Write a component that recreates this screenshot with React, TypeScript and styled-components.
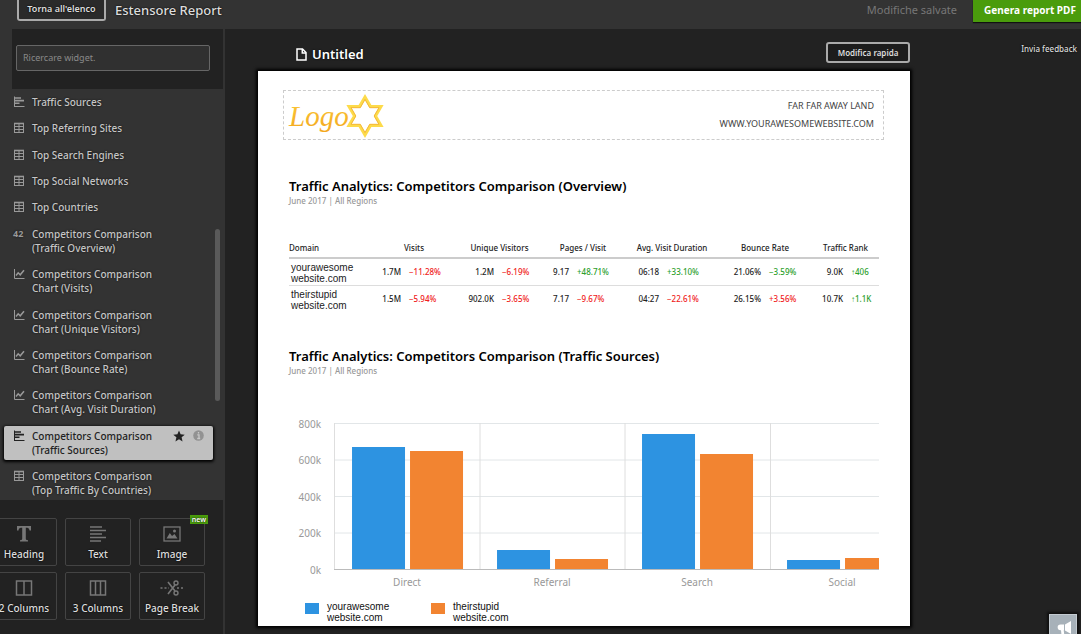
import React from "react";
import styled, { createGlobalStyle, css } from "styled-components";

const GlobalStyle = createGlobalStyle`
  * { box-sizing: border-box; }
  body {
    margin: 0;
    background: #222;
    color: #ddd;
    font-family: "Noto Sans", "Open Sans", sans-serif;
    overflow-x: hidden;
  }
  button, input { font-family: inherit; margin: 0; }
  h1, h2, p, ul { margin: 0; padding: 0; }
`;

const Page = styled.div`
  min-height: 100vh;
  display: flex;
  flex-direction: column;
`;

const TopBar = styled.header`
  height: 29px;
  display: flex;
  align-items: flex-start;
  background: #333;
  padding-left: 17px;
`;

const BackButton = styled.button`
  width: 89px;
  height: 21px;
  padding: 0 0 2px;
  border: 2px solid #aaa;
  border-top: 0;
  border-radius: 0 0 3px 3px;
  background: #2a2a2a;
  color: #ddd;
  font-size: 9px;
  font-weight: 600;
  white-space: nowrap;
  text-shadow: 0 0 2px #000;
`;

const AppTitle = styled.h1`
  margin-left: 9px;
  flex: 1;
  font-size: 13px;
  line-height: 20px;
  font-weight: 500;
  text-shadow: 0 0 2px #000;
`;

const SavedNote = styled.span`
  color: #777;
  font-size: 11px;
  line-height: 20px;
  margin-right: 16px;
`;

const GenerateButton = styled.button`
  width: 108px;
  height: 22px;
  padding: 0 2px 2px 8px;
  border: 0;
  background: #4a9c0c;
  box-shadow: 0 1px 1px #111;
  color: #fff;
  font-size: 10px;
  font-weight: 700;
  white-space: nowrap;
`;

const Body = styled.div`
  flex: 1;
  display: flex;
`;

const Sidebar = styled.aside`
  width: 225px;
  flex: none;
  display: flex;
  flex-direction: column;
  background: #333;
  border-right: 2px solid #333;
`;

const SearchBox = styled.div`
  margin-left: 12px;
  height: 60px;
  padding: 15px 13px 0 4px;
  background: #222;
`;

const SearchInput = styled.input`
  width: 100%;
  height: 26px;
  padding: 0 6px;
  border: 1px solid #666;
  border-radius: 2px;
  background: #303030;
  color: #ddd;
  font-size: 9px;
  &::placeholder { color: #8a8a8a; opacity: 1; }
`;

const ListWrap = styled.div`
  position: relative;
  flex: 1;
  display: flex;
`;

const WidgetList = styled.ul`
  flex: 1;
  list-style: none;
  padding: 3px 10px 0 4px;
  display: flex;
  flex-direction: column;
  justify-content: space-between;
`;

const WidgetRow = styled.li<{ $selected?: boolean }>`
  display: flex;
  align-items: flex-start;
  padding: 3px 9px;
  color: #c6c6c6;
  text-shadow: 0 0 2px #111;
  ${(p) =>
    p.$selected &&
    css`
      background: #c0c0c0;
      color: #222;
      border-radius: 2px;
      box-shadow: 0 1px 3px 1px #000;
      text-shadow: none;
    `}
`;

const RowIcon = styled.span<{ $dark?: boolean }>`
  width: 12px;
  height: 14px;
  margin-right: 7px;
  display: flex;
  align-items: center;
  color: ${(p) => (p.$dark ? "#222" : "#999")};
  font-size: 9px;
  font-weight: 700;
`;

const RowLabel = styled.span`
  flex: 1;
  font-size: 10px;
  line-height: 14px;
  font-weight: 500;
  white-space: pre-line;
`;

const RowActions = styled.span`
  display: flex;
  gap: 8px;
  height: 14px;
  align-items: center;
`;

const ScrollThumb = styled.span`
  position: absolute;
  right: 3px;
  top: 34%;
  height: 42%;
  width: 5px;
  border-radius: 3px;
  background: #5a5a5a;
`;

const Tools = styled.div`
  background: #222;
  padding: 18px 0 14px;
`;

const ToolGrid = styled.div`
  display: grid;
  grid-template-columns: repeat(3, 66px);
  grid-auto-rows: 48px;
  gap: 6px 8px;
  margin-left: -9px;
`;

const ToolButton = styled.button`
  position: relative;
  display: flex;
  flex-direction: column;
  align-items: center;
  justify-content: space-between;
  padding: 5px 0 4px;
  border: 1px solid #444;
  border-radius: 2px;
  background: #222;
  color: #ddd;
  font-size: 10px;
  line-height: 14px;
  font-weight: 500;
  white-space: nowrap;
  text-shadow: 0 0 2px #000;
`;

const NewBadge = styled.span`
  position: absolute;
  top: -4px;
  right: -4px;
  padding: 0 2px;
  background: #4a9c0c;
  color: #fff;
  font-size: 7px;
  font-weight: 600;
  line-height: 9px;
`;

const Main = styled.main`
  flex: 1;
  display: flex;
  align-items: flex-start;
  padding: 12px 0 8px 33px;
`;

const Document = styled.div`
  flex: 1;
  min-width: 0;
`;

const DocBar = styled.div`
  display: flex;
  align-items: flex-end;
  justify-content: space-between;
  height: 22px;
  margin-bottom: 8px;
  padding-left: 38px;
`;

const DocTitle = styled.h2`
  display: flex;
  align-items: center;
  gap: 5px;
  color: #fff;
  font-size: 13px;
  line-height: 18px;
  font-weight: 600;
  text-shadow: 0 0 2px #000;
`;

const QuickEdit = styled.button`
  width: 84px;
  height: 21px;
  padding: 0;
  border: 2px solid #aaa;
  border-radius: 3px;
  background: #1c1c1c;
  color: #ddd;
  font-size: 8px;
  font-weight: 600;
  white-space: nowrap;
`;

const SideLinks = styled.aside`
  width: 171px;
  flex: none;
  display: flex;
  justify-content: flex-end;
  padding: 0 4px 0 0;
  line-height: 16px;
`;

const FeedbackLink = styled.a`
  color: #ddd;
  font-size: 8px;
  font-weight: 500;
  text-decoration: none;
  text-shadow: 0 0 2px #000;
`;

const Paper = styled.article`
  background: #fff;
  color: #222;
  padding: 19px 26px 3px 25px;
  box-shadow: 0 0 3px 2px #000;
`;

const Letterhead = styled.div`
  height: 50px;
  display: flex;
  align-items: center;
  justify-content: space-between;
  border: 1px dashed #ccc;
  padding: 0 9px 0 3px;
`;

const Address = styled.p`
  text-align: right;
  font-size: 9px;
  line-height: 18px;
  color: #444;
`;

const Section = styled.section`
  padding: 0 5px 0 6px;
`;

const SectionTitle = styled.h2`
  color: #000;
  font-size: 13px;
  line-height: 16px;
  font-weight: 600;
`;

const SectionNote = styled.p`
  color: #999;
  font-size: 8px;
  line-height: 14px;
  font-weight: 500;
`;

const OverviewSection = styled(Section)`
  margin-top: 38px;
`;

const SourcesSection = styled(Section)`
  margin-top: 36px;
`;

const Table = styled.table`
  width: 100%;
  margin-top: 34px;
  table-layout: fixed;
  border-collapse: collapse;
  font-size: 8px;
  line-height: 12px;
  font-weight: 500;
  white-space: nowrap;
`;

const HeadCell = styled.th<{ $left?: boolean }>`
  padding: 0 0 3px;
  font-weight: 500;
  text-align: ${(p) => (p.$left ? "left" : "center")};
  border-bottom: 2px solid #ccc;
`;

const BodyRow = styled.tr`
  & + & > * { border-top: 1px solid #ddd; }
`;

const DomainCell = styled.th`
  padding: 3px 2px 1px;
  text-align: left;
  font-family: "Liberation Sans", sans-serif;
  font-size: 10px;
  line-height: 11px;
  font-weight: 400;
  white-space: pre-line;
`;

const ValueCell = styled.td`
  padding: 0 4px 0 0;
  text-align: right;
`;

const ChangeCell = styled.td<{ $good: boolean }>`
  padding: 0 0 0 4px;
  color: ${(p) => (p.$good ? "#2ca02c" : "#f02020")};
`;

const Chart = styled.svg`
  display: block;
  width: 100%;
  height: auto;
  margin-top: 37px;
  font-family: "Noto Sans", sans-serif;
  font-size: 10px;
`;

const Legend = styled.div`
  display: flex;
  padding-left: 16px;
  margin-top: 12px;
`;

const LegendItem = styled.div`
  width: 126px;
  display: flex;
  gap: 8px;
  font-family: "Liberation Sans", sans-serif;
  font-size: 10px;
  line-height: 11px;
  color: #111;
  white-space: pre-line;
`;

const Swatch = styled.span<{ $color: string }>`
  width: 14px;
  height: 11px;
  margin-top: 2px;
  background: ${(p) => p.$color};
`;

const Megaphone = styled.button`
  position: fixed;
  right: 4px;
  bottom: -8px;
  width: 28px;
  height: 28px;
  padding: 4px 0 0 5px;
  border: 1px solid #c3cad0;
  background: #a7b1b9;
  box-shadow: 0 0 2px 2px #111;
`;

const BLUE = "#2d93e1";
const ORANGE = "#f28431";

type IconKind = "bars" | "table" | "line" | "number";

function WidgetIcon({ kind }: { kind: IconKind }) {
  if (kind === "number") return <>42</>;
  if (kind === "bars")
    return (
      <svg width="12" height="12" viewBox="0 0 12 12" fill="none" stroke="currentColor">
        <path d="M1.5 0.5V11" />
        <path d="M1 10.5H11.5" />
        <path d="M2 2H8M2 4.600H11M2 7.200H6.500" strokeWidth="1.600" />
      </svg>
    );
  if (kind === "table")
    return (
      <svg width="12" height="12" viewBox="0 0 12 12" fill="none" stroke="currentColor">
        <rect x="1.5" y="1.5" width="9" height="9" />
        <path d="M1 1.500H11" strokeWidth="1.600" />
        <path d="M1.500 4.500H10.500M1.500 7.500H10.500M6 1.500V10.500" />
      </svg>
    );
  return (
    <svg width="12" height="12" viewBox="0 0 12 12" fill="none" stroke="currentColor">
      <path d="M1.500 1V10.500H11.500" />
      <path d="M3 7.500L5.200 4.800L7.200 6.800L11 2.200" strokeWidth="1.500" />
    </svg>
  );
}

const widgets: { kind: IconKind; label: string; selected?: boolean }[] = [
  { kind: "bars", label: "Traffic Sources" },
  { kind: "table", label: "Top Referring Sites" },
  { kind: "table", label: "Top Search Engines" },
  { kind: "table", label: "Top Social Networks" },
  { kind: "table", label: "Top Countries" },
  { kind: "number", label: "Competitors Comparison\n(Traffic Overview)" },
  { kind: "line", label: "Competitors Comparison\nChart (Visits)" },
  { kind: "line", label: "Competitors Comparison\nChart (Unique Visitors)" },
  { kind: "line", label: "Competitors Comparison\nChart (Bounce Rate)" },
  { kind: "line", label: "Competitors Comparison\nChart (Avg. Visit Duration)" },
  { kind: "bars", label: "Competitors Comparison\n(Traffic Sources)", selected: true },
  { kind: "table", label: "Competitors Comparison\n(Top Traffic By Countries)" },
];

const tools: { label: string; isNew?: boolean; icon: React.ReactNode }[] = [
  {
    label: "Heading",
    icon: <path d="M5 2H19V6.5H17.5C17.2 4.6 16.6 3.8 15 3.8H13.8V14.5C13.8 15.6 14.2 16 16 16.2V17.5H8V16.2C9.800 16 10.200 15.600 10.200 14.500V3.800H9C7.400 3.800 6.800 4.600 6.500 6.500H5Z" fill="currentColor" stroke="none" />,
  },
  { label: "Text", icon: <path d="M4 3H16M4 6.500H20M4 10H16M4 13.500H20M4 17H15" strokeWidth="1.600" /> },
  {
    label: "Image",
    isNew: true,
    icon: (
      <>
        <rect x="4" y="3" width="16" height="14" strokeWidth="1.300" />
        <path d="M6.500 14.500L9.800 9L12 12L14.500 10L17.500 14.500Z" fill="currentColor" stroke="none" />
        <circle cx="14.500" cy="7" r="1.500" fill="currentColor" stroke="none" />
      </>
    ),
  },
  {
    label: "2 Columns",
    icon: (
      <>
        <rect x="4.500" y="3" width="15" height="14" strokeWidth="1.500" />
        <path d="M12 3V17" strokeWidth="1.500" />
      </>
    ),
  },
  {
    label: "3 Columns",
    icon: (
      <>
        <rect x="4.500" y="3" width="15" height="14" strokeWidth="1.500" />
        <path d="M9.500 3V17M14.500 3V17" strokeWidth="1.500" />
      </>
    ),
  },
  {
    label: "Page Break",
    icon: (
      <>
        <path d="M8 4L15 13M8 16L15 7" strokeWidth="1.600" />
        <circle cx="16" cy="5" r="2" strokeWidth="1.400" />
        <circle cx="16" cy="15" r="2" strokeWidth="1.400" />
        <path d="M0.500 10H9M17 10H24" strokeWidth="1.500" strokeDasharray="2 2" />
      </>
    ),
  },
];

const colWidths = [80, 36, 54, 39, 42, 33, 53, 37, 55, 47, 47, 35, 32];
const metrics = ["Visits", "Unique Visitors", "Pages / Visit", "Avg. Visit Duration", "Bounce Rate", "Traffic Rank"];
const rows: { domain: string; cells: [string, string, boolean][] }[] = [
  {
    domain: "yourawesome\nwebsite.com",
    cells: [
      ["1.7M", "−11.28%", false],
      ["1.2M", "−6.19%", false],
      ["9.17", "+48.71%", true],
      ["06:18", "+33.10%", true],
      ["21.06%", "−3.59%", true],
      ["9.0K", "↑406", true],
    ],
  },
  {
    domain: "theirstupid\nwebsite.com",
    cells: [
      ["1.5M", "−5.94%", false],
      ["902.0K", "−3.65%", false],
      ["7.17", "−9.67%", false],
      ["04:27", "−22.61%", false],
      ["26.15%", "+3.56%", false],
      ["10.7K", "↑1.1K", true],
    ],
  },
];

const groups = [
  { label: "Direct", x: 63, blue: 122, orange: 118 },
  { label: "Referral", x: 208, blue: 19, orange: 10 },
  { label: "Search", x: 353, blue: 135, orange: 115 },
  { label: "Social", x: 498, blue: 9, orange: 11 },
];

function SourcesChart() {
  return (
    <Chart viewBox="0 0 590 174" role="img" aria-label="Traffic sources">
      {["800k", "600k", "400k", "200k", "0k"].map((t, i) => (
        <g key={t}>
          <path d={`M45 ${8.5 + i * 36.5}H590`} stroke="#e2e6e8" />
          <text x="32" y={12.5 + i * 36.5} textAnchor="end" fill="#999">{t}</text>
        </g>
      ))}
      {[45.5, 191, 336, 481.5].map((x) => (
        <path key={x} d={`M${x} 8V154`} stroke="#dedede" />
      ))}
      {groups.map((g) => (
        <g key={g.label}>
          <rect x={g.x} y={154 - g.blue} width="53" height={g.blue} fill={BLUE} />
          <rect x={g.x + 58} y={154 - g.orange} width="53" height={g.orange} fill={ORANGE} />
          <text x={g.x + 55} y="171" textAnchor="middle" fill="#999">{g.label}</text>
        </g>
      ))}
      <path d="M45 154.500H590" stroke="#bbb" />
    </Chart>
  );
}

function LogoMark() {
  return (
    <svg width="100" height="46" viewBox="0 0 100 46" role="img" aria-label="Logo">
      <defs>
        <linearGradient id="gold" x1="0" y1="0" x2="0" y2="1">
          <stop offset="0" stopColor="#fbc93a" />
          <stop offset="1" stopColor="#f3a71f" />
        </linearGradient>
      </defs>
      <text x="2" y="34" fontFamily="Liberation Serif, serif" fontStyle="italic" fontSize="29" fill="url(#gold)">Logo</text>
      <path d="M78 5L83.500 14.500H94L88.500 24L94 33.500H83.500L78 43L72.500 33.500H62L67.500 24L62 14.500H72.500Z" fill="#fff" stroke="#fddb4a" strokeWidth="3" />
      <path d="M78 7.400L82.700 15.700H92L87.200 24L92 32.300H82.700L78 40.600L73.300 32.300H64L68.800 24L64 15.700H73.300Z" fill="none" stroke="#f4b83a" strokeWidth="1" />
    </svg>
  );
}

export default function App() {
  return (
    <Page>
      <GlobalStyle />
      <TopBar>
        <BackButton>Torna all'elenco</BackButton>
        <AppTitle>Estensore Report</AppTitle>
        <SavedNote>Modifiche salvate</SavedNote>
        <GenerateButton>Genera report PDF</GenerateButton>
      </TopBar>
      <Body>
        <Sidebar>
          <SearchBox>
            <SearchInput type="text" placeholder="Ricercare widget." aria-label="Ricercare widget." />
          </SearchBox>
          <ListWrap>
            <WidgetList>
              {widgets.map((w) => (
                <WidgetRow key={w.label} $selected={w.selected}>
                  <RowIcon $dark={w.selected}>
                    <WidgetIcon kind={w.kind} />
                  </RowIcon>
                  <RowLabel>{w.label}</RowLabel>
                  {w.selected && (
                    <RowActions>
                      <svg width="12" height="12" viewBox="0 0 24 24" fill="#222">
                        <path d="M12 1L15.200 8.600L23.500 9.300L17.200 14.700L19.100 22.800L12 18.500L4.900 22.800L6.800 14.700L0.500 9.300L8.800 8.600Z" />
                      </svg>
                      <svg width="11" height="11" viewBox="0 0 11 11">
                        <circle cx="5.500" cy="5.500" r="5.300" fill="#929292" />
                        <path d="M4.300 4.800H6V8.500M4.200 8.500H7.200M5.500 2V3.500" stroke="#c8c8c8" strokeWidth="1.300" fill="none" />
                      </svg>
                    </RowActions>
                  )}
                </WidgetRow>
              ))}
            </WidgetList>
            <ScrollThumb />
          </ListWrap>
          <Tools>
            <ToolGrid>
              {tools.map((t) => (
                <ToolButton key={t.label}>
                  <svg width="24" height="20" viewBox="0 0 24 20" fill="none" stroke="currentColor" color="#777">
                    {t.icon}
                  </svg>
                  {t.label}
                  {t.isNew && <NewBadge>new</NewBadge>}
                </ToolButton>
              ))}
            </ToolGrid>
          </Tools>
        </Sidebar>
        <Main>
          <Document>
            <DocBar>
              <DocTitle>
                <svg width="11" height="13" viewBox="0 0 11 13" fill="none" stroke="#fff" strokeWidth="1.500">
                  <path d="M1 1H6.500L10 4.500V12H1Z" />
                  <path d="M6.300 1V5H10" />
                </svg>
                Untitled
              </DocTitle>
              <QuickEdit>Modifica rapida</QuickEdit>
            </DocBar>
            <Paper>
              <Letterhead>
                <LogoMark />
                <Address>
                  FAR FAR AWAY LAND
                  <br />
                  WWW.YOURAWESOMEWEBSITE.COM
                </Address>
              </Letterhead>
              <OverviewSection>
                <SectionTitle>Traffic Analytics: Competitors Comparison (Overview)</SectionTitle>
                <SectionNote>June 2017 | All Regions</SectionNote>
                <Table>
                  <colgroup>
                    {colWidths.map((w, i) => (
                      <col key={i} width={w} />
                    ))}
                  </colgroup>
                  <thead>
                    <tr>
                      <HeadCell $left scope="col">Domain</HeadCell>
                      {metrics.map((m) => (
                        <HeadCell key={m} colSpan={2} scope="colgroup">{m}</HeadCell>
                      ))}
                    </tr>
                  </thead>
                  <tbody>
                    {rows.map((r) => (
                      <BodyRow key={r.domain}>
                        <DomainCell scope="row">{r.domain}</DomainCell>
                        {r.cells.map(([value, change, good], i) => (
                          <React.Fragment key={i}>
                            <ValueCell>{value}</ValueCell>
                            <ChangeCell $good={good}>{change}</ChangeCell>
                          </React.Fragment>
                        ))}
                      </BodyRow>
                    ))}
                  </tbody>
                </Table>
              </OverviewSection>
              <SourcesSection>
                <SectionTitle>Traffic Analytics: Competitors Comparison (Traffic Sources)</SectionTitle>
                <SectionNote>June 2017 | All Regions</SectionNote>
                <SourcesChart />
                <Legend>
                  <LegendItem>
                    <Swatch $color={BLUE} />
                    {"yourawesome\nwebsite.com"}
                  </LegendItem>
                  <LegendItem>
                    <Swatch $color={ORANGE} />
                    {"theirstupid\nwebsite.com"}
                  </LegendItem>
                </Legend>
              </SourcesSection>
            </Paper>
          </Document>
          <SideLinks>
            <FeedbackLink href="#feedback">Invia feedback</FeedbackLink>
          </SideLinks>
        </Main>
      </Body>
      <Megaphone aria-label="Feedback">
        <svg width="18" height="16" viewBox="0 0 18 16" fill="#fff">
          <path d="M14 1V14L8 10.500V4.500Z" />
          <path d="M7 4.500H3.500A2.800 2.800 0 0 0 3.500 10.200H4L4.500 15H7.300L6.700 10.200H7Z" />
        </svg>
      </Megaphone>
    </Page>
  );
}
